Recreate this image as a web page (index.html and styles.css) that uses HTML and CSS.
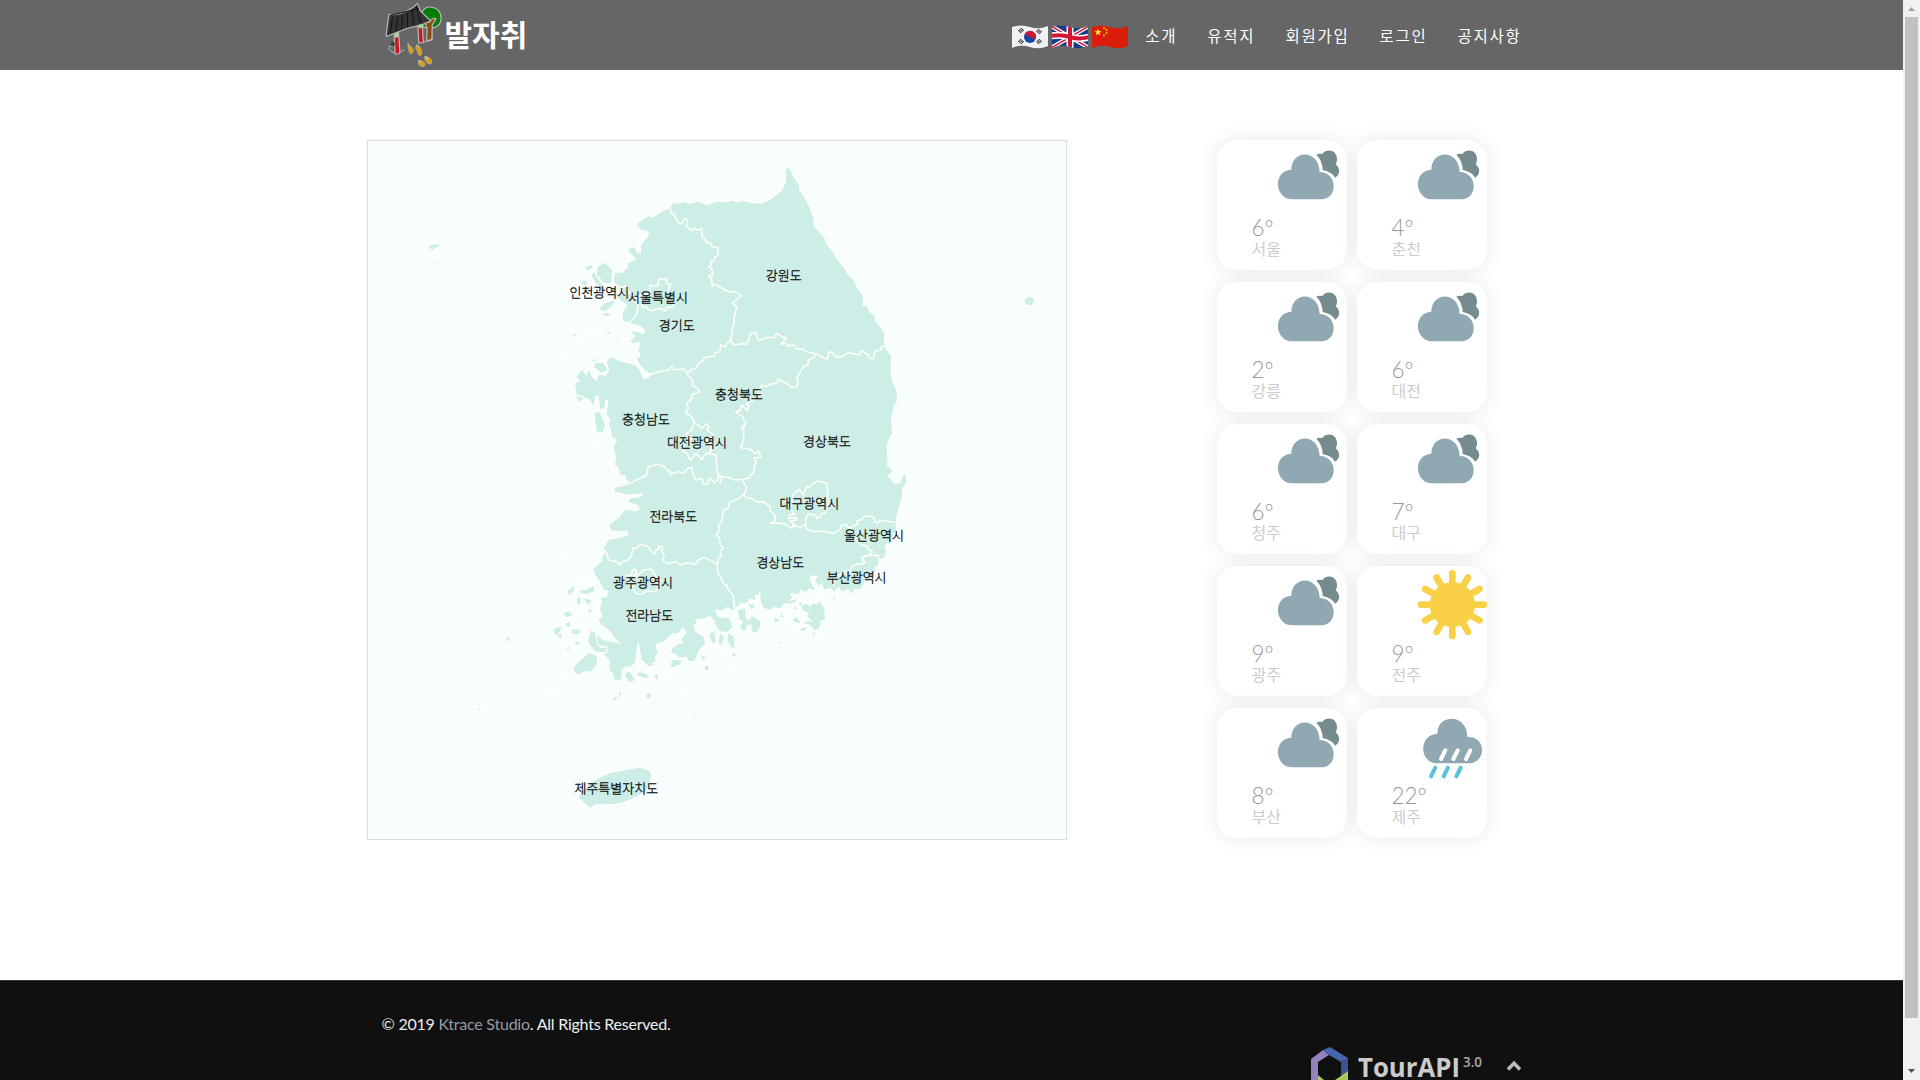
FILE: index.html
```html
<!DOCTYPE html>
<html lang="ko">
<head>
<meta charset="utf-8">
<title>발자취</title>
<link rel="stylesheet" href="styles.css">
</head>
<body>
<div class="page">
<header class="header">
  <div class="container header-row">
    <a class="logo">
      <svg width="60" height="66" viewBox="75 5 180 198">
        <g class="logo-art">
          <path fill="#087c08" d="M187 40C190 25 207 18 219 24C232 25 244 40 241 60C237 78 220 84 214 78L193 80L188 72Z"/>
          <path fill="#8a4c16" d="M194 60L207 68L218 57L226 56L215 73L214 118L202 120L203 84Z"/>
          <path fill="#c91622" d="M175 73L185 72L188 124L178 127Z"/>
          <path fill="#c91622" d="M104 98L114 97L118 157L107 160Z"/>
          <path fill="#333" d="M88 44C112 48 151 35 172 12L179 32L209 61L184 72L142 82L80 106Z"/>
        </g>
        <path d="M104 98L114 97L115 111L105 112ZM175 73L185 72L186 83L176 84Z" fill="#8fe3a0"/>
        <path d="M98 49L91 98M113 48L108 92M128 44L124 87M143 37L142 79M157 29L161 75M170 20L181 68M90 45L176 25" fill="none" stroke="#111" stroke-width="3"/>
        <path d="M118 156L134 148M106 158C82 151 78 136 98 138M188 127L217 116L217 105" fill="none" stroke="#bbb" stroke-width="3"/>
        <path d="M93 126H104V137H93Z" fill="#35451d"/>
        <g fill="#d9a018" stroke="#aaa" stroke-width="2">
          <path d="M148 136C160 138 165 157 153 161C144 156 147 146 143 138Z"/>
          <path d="M168 137C184 134 192 159 180 167C171 163 175 149 166 145Z"/>
          <ellipse cx="185" cy="190" rx="8" ry="11" transform="rotate(-55 185 190)"/>
          <ellipse cx="205" cy="180" rx="8" ry="13" transform="rotate(-45 205 180)"/>
        </g>
        <path d="M143 128L147 137M169 133L178 140M174 180L183 186M194 168L203 177" stroke="#ddd" stroke-width="4" stroke-dasharray="3 2"/>
      </svg>
      <span class="logo-text">발자취</span>
    </a>
    <nav class="nav">
      <div class="flags">
        <svg width="38" height="24" viewBox="0 0 38 24">
          <path d="M1 2Q10-1 19 2Q28 5 37 1V21Q28 25 19 22Q10 19 1 23Z" fill="#f2f2f2"/>
          <circle cx="19" cy="12" r="6" fill="#17479e"/>
          <path d="M13.4 10A6 6 0 0 1 25 13Q22 15 19 12Q15 9 13.4 10Z" fill="#d01632"/>
          <path d="M7 6L11 3M8 7L12 4M9 8L13 5M26 5L30 8M27 4L31 7M25 6L29 9M7 16L11 19M8 15L12 18M9 14L13 17M26 18L30 15M27 19L31 16M25 17L29 14" stroke="#222" stroke-width=".9"/>
        </svg>
        <svg width="38" height="24" viewBox="0 0 38 24">
          <defs><clipPath id="wave"><path d="M1 2Q10-1 19 2Q28 5 37 1V21Q28 25 19 22Q10 19 1 23Z"/></clipPath></defs>
          <g clip-path="url(#wave)"><path d="M0 0H38V24H0Z" fill="#183c87"/>
          <path d="M0 1L38 23M38 1L0 23" stroke="#fff" stroke-width="4"/>
          <path d="M0 1L38 23M38 1L0 23" stroke="#d01632" stroke-width="1.4"/>
          <path d="M19 0V24M0 11Q10 9 19 12T38 12" fill="none" stroke="#fff" stroke-width="7"/>
          <path d="M19 0V24M0 11Q10 9 19 12T38 12" fill="none" stroke="#d01632" stroke-width="4"/></g>
        </svg>
        <svg width="38" height="24" viewBox="0 0 38 24">
          <path d="M1 2Q10-1 19 2Q28 5 37 1V21Q28 25 19 22Q10 19 1 23Z" fill="#d91f0c"/>
          <path d="M7 3.5L8 6L10.500 6.200L8.600 7.800L9.200 10.200L7 8.900L4.800 10.200L5.400 7.800L3.500 6.200L6 6Z" fill="#ffdf20"/>
          <g fill="#f6be1b"><circle cx="13" cy="3" r="1"/><circle cx="15.500" cy="5" r="1"/><circle cx="15.500" cy="8" r="1"/><circle cx="13" cy="10.500" r="1"/></g>
        </svg>
      </div>
      <a>소개</a><a>유적지</a><a>회원가입</a><a>로그인</a><a>공지사항</a>
    </nav>
  </div>
</header>

<main class="container content">
  <div class="map">
    <svg width="698" height="698" viewBox="-516 -27 2094 2094">
      <!-- islets too small to show a fill -->
      <path class="islets" d="M-20 398h3M88 540h8M115 570h8M145 545h8M162 550h8M85 602h4M65 625h5M55 612h3M118 582h3M105 556h8M122 395h6M145 400h9M167 390h8M222 490h8M247 540h6M245 565h12M180 800h4M170 880h4M178 895h4M190 930h5M223 980h3M70 1225h6M74 1240h5M150 1140h4M110 1255h4M105 1220h3M130 1290h12M125 1300h20M150 1310h5M165 1365h12M170 1385h10M127 1370h15M110 1395h20M125 1407h12M140 1423h4M70 1425h15M58 1440h15M85 1455h15M75 1475h12M20 1487h5M95 1490h14M67 1510h10M110 1470h8M130 1430h9M-165 1480h4M-85 1458h4M-132 1567h4M-165 1667h4M25 1625h8M40 1615h15M70 1585h10M85 1600h10M55 1650h2M210 1635h6M245 1650h14M235 1662h8M285 1632h8M315 1637h8M430 1615h3M460 1602h4M427 1627h4M163 1718h4M452 1698h2M445 1688h2M340 1878h6M335 1890h3M515 1490h20M545 1500h14M560 1517h14M580 1545h8M585 1555h3M500 1550h10M475 1535h12M465 1550h8M490 1510h8M370 1560h12M350 1580h16M375 1585h10M325 1560h10M280 1575h14M315 1590h18M680 1395h18M700 1410h14M735 1395h18M740 1415h4M760 1430h22M795 1445h10M830 1450h8M850 1425h4M715 1485h12M750 1473h8M811 1478h4M840 1340h8M880 1340h7M935 1335h8M960 1325h5M725 1380h12M-297 365h4"/>
      <g class="land">
        <!-- mainland -->
        <path d="M390 174L400 157L412 163L430 157L450 162L475 155L500 166L530 155L552 157L580 152L588 158L610 153L640 160L668 161L700 143L727 120L738 95L737 57L747 53L760 80L777 105L776 118L795 145L810 175L820 205L822 228L855 268L857 278L883 313L886 322L918 362L920 370L946 397L948 410L965 430L970 448L966 465L980 468L988 487L1003 495L1005 512L1018 528L1033 550L1031 572L1036 590L1043 605L1054 617L1051 655L1055 690L1070 723L1070 757L1062 762L1059 784L1053 800L1057 850L1045 870L1040 890L1043 930L1040 945L1057 960L1053 968L1042 976L1063 1002L1080 998L1093 970L1099 980L1098 1000L1087 1015L1085 1045L1070 1095L1067 1120L1068 1140L1056 1162L1056 1175L1048 1183L1040 1178L1033 1190L1040 1205L1030 1225L1017 1228L1012 1248L1003 1252L1005 1264L990 1290L975 1290L970 1304L960 1318L945 1316L934 1332L925 1317L905 1325L895 1308L884 1325L870 1313L852 1320L847 1303L835 1305L825 1295L833 1278L815 1276L808 1286L820 1310L826 1322L808 1315L797 1328L782 1317L775 1333L750 1330L757 1343L742 1355L768 1348L770 1354L745 1362L735 1358L720 1375L704 1370L690 1380L672 1374L663 1360L660 1320L655 1335L643 1334L648 1350L630 1345L620 1360L600 1360L596 1368L585 1370L580 1382L562 1370L545 1382L525 1376L533 1400L553 1405L567 1402L573 1415L578 1432L560 1447L540 1443L528 1430L523 1412L507 1394L500 1405L465 1408L470 1418L460 1425L466 1445L490 1460L496 1482L477 1500L463 1534L445 1532L440 1520L418 1523L405 1510L393 1510L397 1494L420 1480L432 1485L423 1467L440 1450L430 1432L412 1452L400 1448L380 1467L370 1475L350 1480L348 1494L355 1510L345 1519L347 1534L334 1540L340 1548L325 1548L305 1530L297 1480L293 1480L285 1540L270 1550L260 1548L245 1560L245 1580L240 1590L225 1590L218 1568L208 1560L210 1530L198 1520L190 1505L198 1490L165 1485L145 1460L152 1440L170 1455L190 1470L245 1482L225 1465L215 1450L200 1435L180 1420L175 1410L187 1400L180 1375L187 1355L180 1345L200 1340L208 1325L190 1318L180 1295L165 1275L160 1258L185 1235L187 1220L200 1203L190 1197L205 1170L240 1163L265 1155L262 1143L215 1142L207 1125L240 1100L255 1078L290 1085L300 1075L290 1065L265 1055L270 1045L300 1042L310 1030L265 1034L225 1025L222 1010L262 1005L265 993L255 985L258 976L240 975L237 955L225 945L228 920L220 890L232 870L215 860L213 840L207 828L210 807L200 793L205 750L195 750L193 776L180 776L176 740L166 735L162 770L148 746L130 745L110 735L105 700L120 695L110 680L125 660L140 676L148 657L155 680L169 693L178 672L197 678L207 660L200 635L210 620L240 633L285 645L300 660L310 689L330 680L333 673L320 665L300 645L290 625L303 620L295 600L303 575L280 580L270 574L286 557L272 545L290 545L309 553L317 542L305 530L270 518L265 515L250 515L247 490L262 465L240 450L221 430L245 432L250 422L225 408L220 400L215 385L225 368L245 368L262 355L265 340L290 328L275 315L265 298L285 290L288 305L303 312L303 285L310 275L323 262L328 245L300 238L290 222L325 198L340 203L350 195L365 185Z"/>
        <!-- west coast -->
        <path d="M172 350L195 338L217 360L213 400L190 400L180 383L170 375ZM133 353L152 345L160 350L145 362ZM177 475L195 460L225 450L215 470L190 485ZM154 377L162 366L170 380L183 400L195 420L184 420L170 405L162 390ZM120 396L135 391L144 400L132 408ZM190 490L207 489L210 499L195 498ZM97 553L105 552L110 557L103 560ZM197 547L210 545L215 551L205 551ZM163 640L190 638L203 658L185 670L165 653ZM155 633L163 624L170 634ZM106 738L132 744L116 756ZM163 788L178 786L196 825L188 846L170 845L166 810ZM-333 286L-303 282L-303 290L-316 294L-320 301L-333 293ZM-316 340L-307 337L-312 344ZM150 1145L155 1140L152 1146Z"/>
        <!-- southwest archipelago -->
        <path d="M82 1322L105 1306L100 1325L86 1336ZM120 1319L138 1320L160 1307L165 1322L142 1333L120 1329ZM130 1345L155 1351L145 1366ZM143 1375L157 1381L150 1390ZM110 1348L120 1340L122 1360L113 1365ZM70 1390L90 1384L96 1398L78 1401ZM40 1437L65 1429L60 1445L47 1457ZM51 1456L65 1450L65 1463L54 1463ZM95 1438L120 1439L119 1450L107 1455L95 1450ZM105 1477L118 1475L120 1481L107 1485ZM76 1420L90 1415L91 1430L83 1433ZM80 1495L89 1488L87 1500L80 1498ZM153 1440L165 1450L171 1480L181 1494L198 1493L199 1506L170 1507L156 1493L144 1475ZM100 1560L108 1542L130 1525L148 1507L172 1520L170 1545L157 1560L150 1565L130 1563L116 1575ZM-105 1467L-90 1459L-97 1476ZM-190 1671L-180 1678L-184 1682ZM77 1597L90 1597L85 1601ZM217 1648L225 1640L233 1638L224 1652ZM235 1630L245 1625L240 1640ZM318 1632L330 1628L334 1640L322 1646ZM255 1570L270 1565L285 1590L268 1597L258 1583ZM290 1575L315 1585L328 1581L315 1569L296 1565ZM341 1579L356 1570L351 1592ZM390 1551L397 1530L423 1530L421 1543L400 1552ZM257 1653L265 1650L260 1660Z"/>
        <!-- south coast islands -->
        <path d="M481 1515L497 1522L490 1532ZM493 1550L506 1546L505 1562L496 1561ZM508 1455L523 1441L528 1475L517 1480ZM540 1450L551 1460L547 1486L535 1480ZM564 1450L583 1462L583 1496L570 1488L563 1470ZM575 1510L588 1512L581 1521ZM594 1380L615 1375L617 1400L625 1412L636 1399L661 1413L660 1430L650 1445L635 1446L635 1425L624 1423L617 1440L607 1443L600 1427L610 1415L597 1407ZM622 1362L645 1364L636 1379ZM701 1402L720 1410L706 1420ZM724 1384L732 1405L722 1400ZM786 1365L800 1361L810 1370L820 1360L830 1363L840 1354L853 1377L855 1410L844 1410L838 1435L824 1441L813 1430L804 1421L788 1424L803 1412L820 1417L799 1397L808 1391L785 1380ZM758 1375L768 1369L770 1380ZM758 1407L770 1400L783 1420L762 1416ZM778 1438L796 1431L800 1438L788 1445ZM817 1447L828 1450L819 1457ZM711 1477L721 1475L720 1483ZM878 1336L887 1343L882 1350ZM775 1360L789 1355L782 1369Z"/>
        <path d="M118 1935L150 1900L185 1880L210 1870L245 1862L300 1853L325 1860L335 1875L325 1910L315 1925L285 1942L265 1951L240 1960L205 1963L180 1963L165 1963L150 1973L118 1945ZM1453 451L1464 440L1480 443L1484 453L1475 465L1458 464Z"/>
      </g>
      <!-- province boundaries -->
      <g class="borders">
        <path d="M390 172L392 188L402 193L408 205L414 217L420 222L428 218L432 208L440 208L443 217L437 228L455 242L463 236L475 240L485 235L487 262L495 265L498 277L512 280L517 290L533 292L535 315L525 320L522 332L512 335L515 344L507 350L517 360L517 375L505 378L515 388L517 408L525 403L555 420L570 425L590 426L603 438L577 460L590 470L583 500L582 523L578 530L575 555L572 567L577 580L586 585L605 581L622 582L625 570L632 550L648 547L655 572L680 562L700 563L713 550L725 560L740 563L722 583L738 580L745 590L760 583L768 597L785 596L800 605L830 612L862 628L868 605L878 608L888 620L900 622L925 608L940 611L960 615L965 602L985 615L990 625L1000 626L1005 604L1022 600L1026 590L1036 588"/>
        <path d="M572 567L555 590L542 585L540 605L525 608L525 617L495 622L488 633L475 640L470 655L457 657L441 670L437 662L430 657L405 660L395 650L385 660L350 667L330 673"/>
        <path d="M441 668L445 678L458 690L457 705L470 713L478 725L455 735L457 742L450 750L453 754L440 760L445 775L438 790L455 800L462 815L458 828L455 840L440 850L440 860L455 866L438 878L432 890L428 903L442 910L447 925L455 930L463 912L475 916L485 928L500 910L528 915L530 950L533 970L545 983L540 1000"/>
        <path d="M465 820L475 825L485 835L500 822L508 832L500 840L518 852L518 862L505 868L500 875L515 890L512 905L500 910"/>
        <path d="M220 1012L262 1002L275 997L300 985L320 975L325 950L350 943L375 950L378 958L390 963L390 973L415 965L430 969L445 955L455 953L460 975L468 990L485 985L490 1003L502 1003L510 985L522 997L535 990L535 973L545 980L570 983L585 990L610 988"/>
        <path d="M830 612L825 620L805 630L805 644L790 650L770 685L775 700L770 710L755 713L740 700L715 688L710 700L690 703L678 710L665 706L655 725L662 735L640 750L618 762L627 765L622 782L605 765L600 783L588 783L590 790L610 800L610 810L618 815L614 830L606 829L612 845L610 870L602 893L617 895L635 900L645 912L655 902L663 922L643 923L648 940L643 950L640 970L630 975L630 983L610 988L610 998L620 1010L612 1035L605 1037L600 1045L570 1057L565 1075L550 1080L545 1115L535 1127L540 1140L528 1155L538 1163L540 1180L550 1195L540 1205L543 1220L535 1225L535 1240L530 1242"/>
        <path d="M612 1035L622 1045L635 1045L650 1056L670 1055L690 1070L690 1082L705 1095L705 1111L692 1120L715 1120L735 1122L755 1135L760 1125L780 1132L797 1122L800 1137L820 1145L845 1143L880 1150L900 1139L905 1125L920 1125L930 1137L938 1128L955 1123L950 1113L962 1110L975 1098L1000 1100L1005 1115L1015 1118L1020 1110L1035 1113L1065 1117"/>
        <path d="M755 1135L765 1125L750 1113L770 1110L770 1103L745 1105L750 1095L765 1092L750 1077L757 1060L757 1040L765 1025L780 1020L790 1035L800 1010L808 1012L820 1000L835 993L860 1000L863 1020L862 1040L865 1070L855 1090L845 1090L840 1101L830 1105L828 1095L805 1092L797 1105L797 1125"/>
        <path d="M930 1132L940 1150L930 1165L955 1175L965 1185L980 1188L985 1200L997 1203L992 1217L1012 1215L1018 1228M995 1212L965 1222L975 1240L940 1245L930 1260L910 1268L890 1280L880 1295L882 1310"/>
        <path d="M200 1205L205 1230L230 1235L240 1245L245 1235L265 1230L275 1215L278 1195L290 1193L300 1183L325 1190L330 1200L345 1212L348 1200L357 1198L357 1188L368 1190L365 1205L373 1215L368 1230L380 1240L410 1235L420 1245L440 1238L465 1243L475 1230L490 1222L515 1232L530 1242L535 1272L545 1286L550 1302L560 1305L565 1320L580 1335L583 1375"/>
        <path d="M285 1258L290 1270L282 1275L290 1280L310 1260L335 1258L345 1275L350 1284L362 1292L353 1300L357 1312L345 1325L320 1323L305 1333L290 1331L280 1320L282 1310L265 1302L265 1285L260 1276L275 1275L277 1262Z"/>
        <path d="M330 405L345 410L355 404L355 388L367 386L375 390L380 385L382 402L392 403L384 423L390 430L404 430L400 440L405 455L400 470L380 473L375 483L362 475L345 478L340 482L325 480L320 470L305 470L305 452L290 445L290 437L310 438L330 427Z"/>
        <path d="M222 368L220 400L245 415L255 407L270 430L285 440L283 450L295 465L290 495L270 515"/>
      </g>
      <g class="labels">
        <text x="731" y="389">강원도</text><text x="178" y="441">인천광역시</text><text x="354" y="456">서울특별시</text><text x="410" y="539">경기도</text>
        <text x="597" y="747">충청북도</text><text x="318" y="822">충청남도</text><text x="471" y="890">대전광역시</text><text x="861" y="887">경상북도</text>
        <text x="808" y="1073">대구광역시</text><text x="400" y="1112">전라북도</text><text x="1002" y="1169">울산광역시</text><text x="721" y="1250">경상남도</text>
        <text x="309" y="1310">광주광역시</text><text x="950" y="1296">부산광역시</text><text x="328" y="1409">전라남도</text><text x="229" y="1928">제주특별자치도</text>
      </g>
    </svg>
  </div>

  <svg class="symbols" width="0" height="0">
    <symbol id="cloudy" viewBox="0 0 210 210">
      <path d="M118 14Q124 10 136 12C147-4 175-1 179 20Q182 35 176 43C189 53 192 72 174 83Q166 66 137 60Q136 31 118 14Z" fill="#768b8e"/>
      <path d="M42 148C-9 144-12 61 43 59C44-3 126-3 128 66C182 66 184 147 134 148Z" fill="#90a8b2"/>
    </symbol>
    <symbol id="sunny" viewBox="0 0 210 210">
      <circle cx="106" cy="104" r="68" fill="#f8d147"/>
      <path d="M106 10V198M12 104H200M59 22.600L153 185.400M24.600 57L187.400 151M153 22.600L59 185.400M187.400 57L24.600 151" stroke="#f8d147" stroke-width="20" stroke-linecap="round"/>
    </symbol>
    <symbol id="rainy" viewBox="0 0 210 210">
      <path d="M60 154C5 152 5 67 61 65C61 4 151 4 151 75C210 73 208 153 157 154Z" fill="#90a8b2"/>
      <path d="M85 115L72 141M122 115L109 141M160 115L147 141" stroke="#fff" stroke-width="12" stroke-linecap="round"/>
      <path d="M55 167L42 193M93 167L80 193M131 167L118 193" stroke="#57c3db" stroke-width="12" stroke-linecap="round"/>
    </symbol>
  </svg>
  <section class="weather">
    <article class="card"><svg class="icon"><use href="#cloudy"/></svg><b>6º</b><span>서울</span></article>
    <article class="card"><svg class="icon"><use href="#cloudy"/></svg><b>4º</b><span>춘천</span></article>
    <article class="card"><svg class="icon"><use href="#cloudy"/></svg><b>2º</b><span>강릉</span></article>
    <article class="card"><svg class="icon"><use href="#cloudy"/></svg><b>6º</b><span>대전</span></article>
    <article class="card"><svg class="icon"><use href="#cloudy"/></svg><b>6º</b><span>청주</span></article>
    <article class="card"><svg class="icon"><use href="#cloudy"/></svg><b>7º</b><span>대구</span></article>
    <article class="card"><svg class="icon"><use href="#cloudy"/></svg><b>9º</b><span>광주</span></article>
    <article class="card"><svg class="icon high"><use href="#sunny"/></svg><b>9º</b><span>전주</span></article>
    <article class="card"><svg class="icon"><use href="#cloudy"/></svg><b>8º</b><span>부산</span></article>
    <article class="card"><svg class="icon high"><use href="#rainy"/></svg><b>22º</b><span>제주</span></article>
  </section>
</main>

<footer class="footer">
  <div class="container footer-inner">
    <p class="copy">© 2019 <a>Ktrace Studio</a>. All Rights Reserved.</p>
    <div class="footer-links">
      <svg width="174" height="33" viewBox="0 0 174 33">
        <path d="M1 12L13 3L19 8L8 15V33H1Z" fill="#9482bc"/>
        <path d="M13 3L20 0L38 11V31L31 35V15L19 8Z" fill="#4764ac"/>
        <path d="M31 14L38 11V25L31 30Z" fill="#3e5290"/>
        <path d="M38 24V33H25L31 29ZM8 28L14 33H8Z" fill="#a8c95b"/>
        <text class="brand" x="48" y="30" textLength="102" lengthAdjust="spacingAndGlyphs">TourAPI</text>
        <text class="version" x="153" y="20" textLength="19" lengthAdjust="spacingAndGlyphs">3.0</text>
      </svg>
      <svg class="to-top" width="16" height="12" viewBox="0 0 16 12"><path d="M2 9.500L8 3.300L14 9.500" fill="none" stroke="#b9bdc0" stroke-width="3.400"/></svg>
    </div>
  </div>
</footer>
</div>
<div class="scrollbar">
  <svg width="17" height="17"><path d="M5 11H12L8.500 7Z" fill="#a3a3a3"/></svg>
  <div class="thumb"></div>
  <svg width="17" height="17"><path d="M5 6H12L8.500 10Z" fill="#505050"/></svg>
</div>
</body>
</html>
```
FILE: styles.css
```css
* { box-sizing: border-box; }
body {
  margin: 0;
  height: 1080px;
  display: flex;
  overflow: hidden;
  background: #fff;
  font-family: Lato, "Noto Sans CJK KR", sans-serif;
  font-size: 16px;
}
svg { display: block; flex: none; }
.page { width: 1903px; height: 1080px; overflow: hidden; }
.container { width: 1170px; margin: 0 auto; }
.header { height: 70px; background: #666; }
.header-row { height: 70px; display: flex; justify-content: space-between; padding: 0 15px 0 18px; }
.logo { display: flex; padding-top: 2px; }
.logo-art { stroke: #bbb; stroke-width: 7; stroke-linejoin: round; paint-order: stroke; }
.logo-text {
  color: #fff;
  font: 700 30px/62px "Noto Sans CJK KR", sans-serif;
}
.nav { display: flex; align-items: center; font-family: "Noto Sans CJK KR", sans-serif; }
.nav a { color: #fff; padding: 0 15px; font-size: 15.5px; letter-spacing: 1.75px; line-height: 70px; }
.nav a:last-child { padding-right: 0; }
.flags { display: flex; gap: 2px; padding: 4px 1px 0 0; }

.content { display: flex; gap: 150px; padding-top: 70px; height: 910px; }
.map { width: 700px; height: 700px; border: 1px solid #dadddd; background: #f8fdfe; flex: none; }
.land { fill: #cdeee6; stroke: #fff; stroke-width: 8; stroke-linejoin: round; paint-order: stroke; }
.borders { fill: none; stroke: #fff; stroke-width: 4.5; stroke-linejoin: round; }
.islets { fill: none; stroke: #fff; stroke-width: 8; stroke-linecap: round; }
.labels { font: 300 39px "Noto Sans CJK KR", sans-serif; text-anchor: middle; fill: #000; stroke: #000; stroke-width: .8; }
.symbols { position: absolute; }

.weather { display: grid; grid-template-columns: 130px 130px; grid-auto-rows: 130px; gap: 12px 10px; }
.card {
  display: flex;
  flex-direction: column;
  padding-left: 35px;
  border-radius: 20px;
  overflow: hidden;
  box-shadow: 0 0 20px rgba(0, 0, 0, .09);
  background: #fff;
}
.icon { width: 70px; height: 70px; margin: 10px 0 -4px 25.5px; }
.icon.high { margin: 4px 0 2px 25.5px; }
.card b { font-weight: 300; font-size: 22.5px; line-height: 24px; color: #999; }
.card span { font-size: 16px; line-height: 18px; color: #ccc; }

.footer { height: 100px; background: #101010; border-top: 1px solid #303532; color: #eee; }
.footer-inner { padding: 31px 15px 0; }
.copy { margin: 0; line-height: 24px; font-size: 16px; letter-spacing: -.23px; }
.copy a { color: #979ba0; }
.footer-links { display: flex; justify-content: flex-end; gap: 22px; padding-top: 11px; }
.to-top { margin-top: 13px; }
.brand { font: 700 27px "Open Sans", sans-serif; fill: #ccc; }
.version { font: 600 14px "Open Sans", sans-serif; fill: #aaa; }

.scrollbar { width: 17px; height: 1080px; background: #f1f1f1; display: flex; flex-direction: column; }
.thumb { width: 13px; height: 1001px; margin: 0 2px 45px; background: #c1c1c1; }
```
